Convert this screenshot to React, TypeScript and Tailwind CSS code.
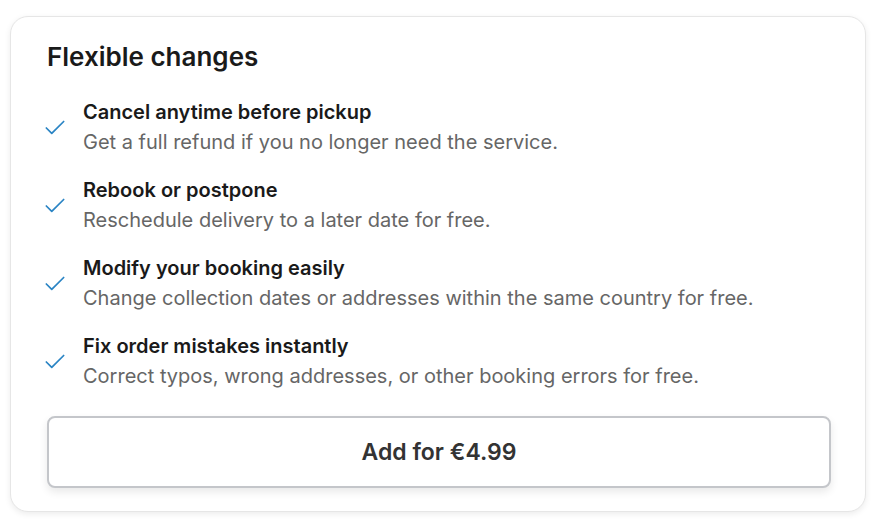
import React from "react";

const items = [
  { t: "Cancel anytime before pickup", d: "Get a full refund if you no longer need the service." },
  { t: "Rebook or postpone", d: "Reschedule delivery to a later date for free." },
  { t: "Modify your booking easily", d: "Change collection dates or addresses within the same country for free." },
  { t: "Fix order mistakes instantly", d: "Correct typos, wrong addresses, or other booking errors for free." },
];

function Check() {
  return (
    <svg width="26" height="26" viewBox="0 0 24 24" fill="none" stroke="#2a84c4" strokeWidth="1.6" strokeLinecap="round" strokeLinejoin="round">
      <path d="M20 6 9 17l-5-5" />
    </svg>
  );
}

export default function App() {
  return (
    <div className="w-[879px] h-[522px] bg-white pt-4 pl-[10px]" style={{ fontFamily: "Inter, 'Noto Sans', sans-serif" }}>
      <div className="w-[856px] h-[496px] rounded-[18px] border border-[#e6e6e6] bg-white shadow-[0_2px_6px_rgba(0,0,0,0.08)] pt-[24px] px-9 flex flex-col">
        <h2 className="text-[26px] leading-8 font-semibold text-[#1a1a1a]">Flexible changes</h2>
        <div className="mt-[24px] flex flex-col gap-[18px]">
          {items.map((it) => (
            <div key={it.t} className="flex items-center">
              <div className="w-[36px] shrink-0 flex items-center -ml-[5px] mr-[5px] pt-[1px]">
                <Check />
              </div>
              <div className="flex flex-col">
                <div className="text-[20px] leading-[30px] font-semibold text-[#1a1a1a]">{it.t}</div>
                <div className="text-[20px] leading-[30px] text-[#666666]">{it.d}</div>
              </div>
            </div>
          ))}
        </div>
        <button className="mt-[25px] w-[784px] h-[72px] rounded-lg border-2 border-[#c4c6ca] bg-white shadow-[0_4px_8px_rgba(0,0,0,0.09)] text-[23px] font-semibold text-[#333]">
          Add for €4.99
        </button>
      </div>
    </div>
  );
}
